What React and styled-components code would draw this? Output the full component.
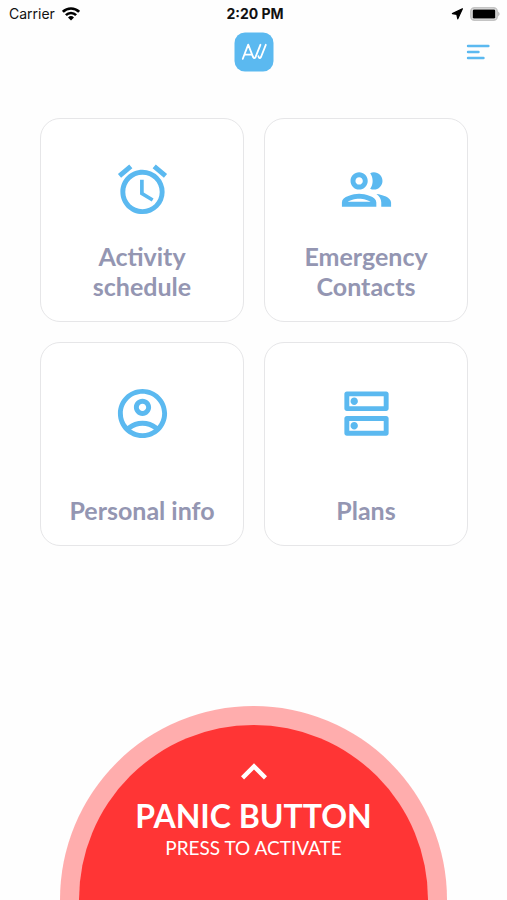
import styled, { createGlobalStyle } from 'styled-components'
import {
    MdAlarm,
    MdOutlineGroup,
    MdOutlineAccountCircle,
    MdOutlineDns,
    MdKeyboardArrowUp,
} from 'react-icons/md'

const BLUE = '#5bb9f0'
const RED = '#ff3535'

const MENU_ITEMS = [
    { label: 'Activity schedule', icon: MdAlarm },
    { label: 'Emergency Contacts', icon: MdOutlineGroup },
    { label: 'Personal info', icon: MdOutlineAccountCircle },
    { label: 'Plans', icon: MdOutlineDns },
]

function StatusBar() {
    return (
        <Status>
            <StatusSide>
                Carrier
                <svg width="18" height="14" viewBox="0 0 18 14" aria-label="Wi-Fi">
                    <g fill="none" stroke="#000" strokeWidth="2.6">
                        <path d="M0.9 4.8 A11.5 11.5 0 0 1 17.1 4.8" />
                        <path d="M3.9 8.1 A7.2 7.2 0 0 1 14.1 8.1" />
                    </g>
                    <path d="M6 10.4 A4.4 4.4 0 0 1 12 10.4 L9 13.4 Z" />
                </svg>
            </StatusSide>
            <Time>2:20 PM</Time>
            <StatusSide $end>
                <svg width="12" height="12" viewBox="0 0 12 12" aria-label="Location">
                    <path d="M11.4 0.8 L1.4 5.6 L5.8 6.3 L6.8 10.8 Z" stroke="#000" strokeWidth="1.2" strokeLinejoin="round" />
                </svg>
                <svg width="31" height="14" viewBox="0 0 31 14" aria-label="Battery">
                    <rect x="0.9" y="0.9" width="26.2" height="12.2" rx="3.6" fill="#fff" stroke="#c4c4c4" strokeWidth="1.8" />
                    <rect x="2.7" y="2.4" width="22.6" height="9.2" rx="1.4" />
                    <path d="M28.2 4.6 Q31 7 28.2 9.4 Z" fill="#b4b4b4" />
                </svg>
            </StatusSide>
        </Status>
    )
}

function Logo() {
    return (
        <svg width="40" height="40" viewBox="0 0 40 40" role="img" aria-label="Logo">
            <rect x="0.5" y="0.5" width="39" height="39" rx="10.5" fill={BLUE} />
            <g fill="none" stroke="#fff" strokeWidth="1.8" strokeLinecap="round" strokeLinejoin="round">
                <path d="M8.8 26.8 L14.2 12.6 L18.4 23.4 Q19.8 27.4 21.4 25.4 L26.4 12.8" />
                <path d="M11 22.6 H17.6" />
                <path d="M24.4 24.2 Q25.4 27.6 27 25 L31.8 12.8" />
            </g>
        </svg>
    )
}

function App() {
    return (
        <Page>
            <GlobalStyle />
            <StatusBar />
            <Header>
                <span />
                <Logo />
                <MenuButton aria-label="Menu">
                    <svg width="24" height="16" viewBox="0 0 24 16">
                        <path
                            d="M2 2 H22.4 M2 8 H12.5 M2 14 H17.5"
                            stroke={BLUE}
                            strokeWidth="2.4"
                            strokeLinecap="round"
                        />
                    </svg>
                </MenuButton>
            </Header>
            <CardGrid>
                {MENU_ITEMS.map(({ label, icon: Icon }) => (
                    <Card key={label}>
                        <Icon size={59} color={BLUE} />
                        <CardLabel>{label}</CardLabel>
                    </Card>
                ))}
            </CardGrid>
            <PanicButton>
                <PanicInner>
                    <MdKeyboardArrowUp size={52} />
                    <PanicTitle>PANIC BUTTON</PanicTitle>
                    <PanicHint>PRESS TO ACTIVATE</PanicHint>
                </PanicInner>
            </PanicButton>
        </Page>
    )
}

export default App

const GlobalStyle = createGlobalStyle`
    * {
        box-sizing: border-box;
    }

    body {
        margin: 0;
        background: #fefefe;
        font-family: Lato, "Open Sans", sans-serif;
    }

    button {
        margin: 0;
        border: none;
        font-family: inherit;
        cursor: pointer;
    }

    svg {
        display: block;
        flex-shrink: 0;
    }
`

const Page = styled.div`
    display: flex;
    flex-direction: column;
    min-height: 100vh;
`

const Status = styled.div`
    display: grid;
    grid-template-columns: 1fr auto 1fr;
    align-items: center;
    height: 27px;
    padding: 0 6px 0 9px;
    color: #111;
    font-family: Inter, sans-serif;
    font-size: 14px;
`

const StatusSide = styled.div`
    display: flex;
    align-items: center;
    justify-content: ${props => props.$end ? 'flex-end' : 'flex-start'};
    gap: 7px;
`

const Time = styled.div`
    font-weight: 700;
`

const Header = styled.header`
    display: grid;
    grid-template-columns: 1fr auto 1fr;
    align-items: center;
    padding: 5px 17px 0;
`

const MenuButton = styled.button`
    justify-self: end;
    padding: 0;
    background: none;
`

const CardGrid = styled.main`
    display: grid;
    grid-template-columns: 1fr 1fr;
    gap: 20px;
    padding: 46px 39px 40px 40px;
`

const Card = styled.button`
    display: flex;
    flex-direction: column;
    align-items: center;
    justify-content: space-between;
    aspect-ratio: 1;
    padding: 41px 20px 20px;
    border: 1px solid #e6e6e8;
    border-radius: 20px;
    background: #fff;
`

const CardLabel = styled.span`
    color: #9496b2;
    font-size: 25px;
    font-weight: 700;
    line-height: 30px;
    text-align: center;
`

/* Half circle resting on the bottom edge of the screen */
const PanicButton = styled.button`
    display: flex;
    align-self: center;
    width: 76.5%;
    aspect-ratio: 2;
    margin-top: auto;
    padding: 19px 19px 0;
    border-radius: 999px 999px 0 0;
    background: #ffadad;
`

const PanicInner = styled.span`
    display: flex;
    flex: 1;
    flex-direction: column;
    align-items: center;
    align-self: stretch;
    padding-top: 21px;
    border-radius: 999px 999px 0 0;
    background: ${RED};
    color: #fff;
`

const PanicTitle = styled.span`
    font-size: 32px;
    font-weight: 700;
    line-height: 36px;
    white-space: nowrap;
`

const PanicHint = styled.span`
    font-size: 19px;
    line-height: 28px;
    white-space: nowrap;
`
